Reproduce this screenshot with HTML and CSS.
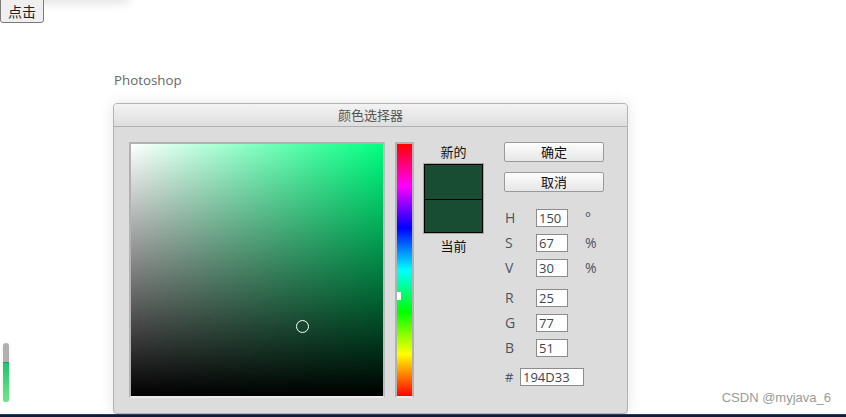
FILE: index.html
```html
<!DOCTYPE html>
<html lang="zh">
<head>
<meta charset="utf-8">
<title>Photoshop</title>
<link rel="stylesheet" href="styles.css">
</head>
<body>
<div class="top-shadow"></div>
<button class="trigger">点击</button>
<div class="stage">
  <div class="caption">Photoshop</div>
  <div class="dialog">
    <div class="titlebar">颜色选择器</div>
    <div class="dlg-body">
      <div class="sv">
        <div class="sv-inner">
          <div class="sv-cursor"></div>
        </div>
      </div>
      <div class="hue">
        <div class="hue-inner">
          <div class="hue-marker"></div>
        </div>
      </div>
      <div class="swatch-col">
        <div class="sw-label">新的</div>
        <div class="swatch">
          <div class="sw-new"></div>
          <div class="sw-cur"></div>
        </div>
        <div class="sw-label sw-label-bottom">当前</div>
      </div>
      <div class="controls">
        <button class="btn">确定</button>
        <button class="btn">取消</button>
        <div class="fields fields-hsv">
          <div class="row"><span class="lbl">H</span><span class="inp">150</span><span class="unit">°</span></div>
          <div class="row"><span class="lbl">S</span><span class="inp">67</span><span class="unit">%</span></div>
          <div class="row"><span class="lbl">V</span><span class="inp">30</span><span class="unit">%</span></div>
        </div>
        <div class="fields fields-rgb">
          <div class="row"><span class="lbl">R</span><span class="inp">25</span></div>
          <div class="row"><span class="lbl">G</span><span class="inp">77</span></div>
          <div class="row"><span class="lbl">B</span><span class="inp">51</span></div>
        </div>
        <div class="row hex-row"><span class="lbl lbl-hash">#</span><span class="inp inp-hex">194D33</span></div>
      </div>
    </div>
  </div>
</div>
<div class="taskbar"></div>
<div class="mini-slider"><div class="mini-fill"></div></div>
<div class="watermark">CSDN @myjava_6</div>
</body>
</html>
```

FILE: styles.css
```css
html, body {
  margin: 0;
  padding: 0;
}
body {
  width: 846px;
  height: 417px;
  overflow: hidden;
  position: relative;
  background: #ffffff;
  font-family: "Noto Sans", "Noto Sans CJK SC", sans-serif;
}
.top-shadow {
  position: absolute;
  left: 30px;
  top: -20px;
  width: 100px;
  height: 20px;
  box-shadow: 0 4px 10px rgba(0,0,0,0.10);
  border-radius: 6px;
}
.trigger {
  display: block;
  margin: -4px 0 0 0;
  height: 27px;
  width: 44px;
  padding: 0;
  border: 1px solid #7a7a7a;
  border-radius: 3px;
  background: #efefef;
  font-family: "Noto Sans CJK SC", sans-serif;
  font-size: 14px;
  color: #222;
  line-height: 20px;
  padding-top: 3px;
  position: relative;
  z-index: 1;
}
.stage {
  margin: 47px 0 0 113px;
}
.caption {
  height: 20px;
  line-height: 20px;
  font-size: 13.3px;
  color: #666;
  padding-left: 1px;
  margin-bottom: 13px;
  font-family: "Open Sans", "Noto Sans", sans-serif;
}
.dialog {
  width: 513px;
  height: 309px;
  border: 1px solid #b3b3b3;
  border-radius: 4px;
  background: #dcdcdc;
  box-shadow: 0 0 14px rgba(0,0,0,0.10);
  overflow: hidden;
}
.titlebar {
  height: 22px;
  line-height: 22px;
  border-bottom: 1px solid #b0b0b0;
  background: linear-gradient(#f3f3f3, #dedede);
  text-align: center;
  font-family: "Noto Sans CJK SC", sans-serif;
  font-size: 13px;
  color: #555;
}
.dlg-body {
  display: flex;
  align-items: flex-start;
  padding: 15px 0 0 15px;
}
.sv {
  width: 252px;
  height: 252px;
  border: 2px solid #b2b2b2;
  border-bottom-color: #ececec;
  border-right-color: #bdbdbd;
}
.sv-inner {
  position: relative;
  width: 252px;
  height: 252px;
  background:
    linear-gradient(to bottom, rgba(0,0,0,0), #000),
    linear-gradient(to right, #ffffff, #00ff80);
}
.sv-cursor {
  position: absolute;
  left: 165px;
  top: 176px;
  width: 11px;
  height: 11px;
  border: 1.6px solid #ffffff;
  border-radius: 50%;
}
.hue {
  margin-left: 10px;
  width: 15px;
  height: 252px;
  border: 2px solid #b2b2b2;
  border-bottom-color: #ececec;
}
.hue-inner {
  position: relative;
  width: 15px;
  height: 252px;
  background: linear-gradient(to bottom, #ff0000 0%, #ff00ff 16.67%, #0000ff 33.33%, #00ffff 50%, #00ff00 66.67%, #ffff00 83.33%, #ff0000 100%);
}
.hue-marker {
  position: absolute;
  left: 0;
  top: 148px;
  width: 4px;
  height: 8px;
  background: #ffffff;
}
.swatch-col {
  margin-left: 10px;
  width: 59px;
  display: flex;
  flex-direction: column;
  align-items: center;
}
.sw-label {
  height: 22px;
  line-height: 20px;
  font-family: "Noto Sans CJK SC", sans-serif;
  font-size: 13px;
  color: #111;
}
.sw-label-bottom {
  margin-top: 3px;
}
.swatch {
  width: 57px;
  height: 67px;
  border: 1px solid #000;
  box-shadow: 0 0 0 1px #a8a8a8;
  display: flex;
  flex-direction: column;
}
.sw-new {
  height: 34px;
  background: #194D33;
  border-bottom: 1px solid #000;
}
.sw-cur {
  flex: 1;
  background: #194D33;
}
.controls {
  margin-left: 21px;
  display: flex;
  flex-direction: column;
  width: 110px;
}
.btn {
  width: 100px;
  height: 20px;
  padding: 0;
  margin: 0 0 10px 0;
  border: 1px solid #9a9a9a;
  border-radius: 2px;
  background: linear-gradient(#fdfdfd, #e6e6e6);
  font-family: "Noto Sans CJK SC", sans-serif;
  font-size: 13px;
  line-height: 18px;
  color: #111;
}
.fields {
  display: flex;
  flex-direction: column;
  gap: 7px;
}
.fields-hsv {
  margin-top: 7px;
}
.fields-rgb {
  margin-top: 12px;
}
.row {
  display: flex;
  align-items: center;
  height: 18px;
}
.lbl {
  width: 32px;
  padding-left: 1px;
  box-sizing: border-box;
  font-family: "Open Sans", "Noto Sans", sans-serif;
  font-size: 14px;
  line-height: 16px;
  color: #4a5563;
}
.inp {
  height: 16px;
  border: 1px solid #8c8c8c;
  background: #ffffff;
  font-family: "Open Sans", "Noto Sans", sans-serif;
  font-size: 13px;
  line-height: 16px;
  color: #3c4652;
  padding-left: 2px;
  box-sizing: content-box;
  width: 28px;
}
.unit {
  margin-left: 17px;
  font-family: "Open Sans", "Noto Sans", sans-serif;
  font-size: 14px;
  line-height: 16px;
  color: #4a5563;
}
.hex-row {
  margin-top: 11px;
}
.lbl-hash {
  width: 16px;
  font-size: 13px;
}
.inp-hex {
  width: 60px;
  padding-left: 2px;
}
.taskbar {
  margin-top: 0;
  height: 3px;
  background: #111a3a;
  border-top: 1px solid #2b3a66;
}
.mini-slider {
  position: absolute;
  left: 3px;
  top: 343px;
  width: 6px;
  height: 59px;
  border-radius: 3px;
  background: #b0b0b0;
  overflow: hidden;
  box-shadow: 0 0 4px rgba(0,0,0,0.08);
}
.mini-fill {
  margin-top: 19px;
  height: 40px;
  background: linear-gradient(#23c46a, #6eea8a);
  border-top: 1px solid #1f9e57;
}
.watermark {
  position: absolute;
  right: 15px;
  top: 390px;
  font-family: "Liberation Sans", Arial, sans-serif;
  font-size: 13px;
  color: #9a9a9a;
}
```
